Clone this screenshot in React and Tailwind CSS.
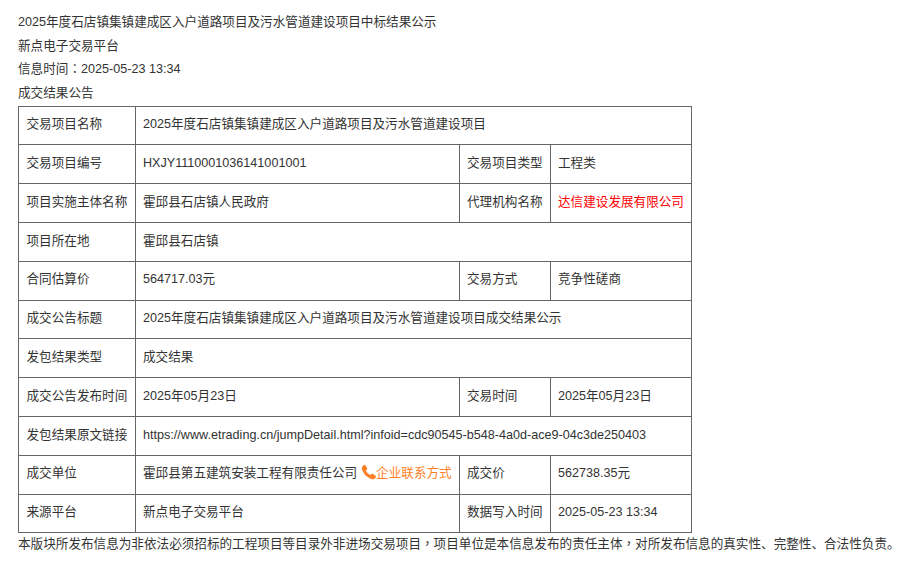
import React from 'react';

const label = 'border border-[#666] px-[7.5px] pb-[1px] font-normal text-left whitespace-nowrap';
const cell = 'border border-[#666] px-[7px] pb-[1px] whitespace-nowrap';
// centred full-width punctuation, as in the reference
const punct = "font-['Noto_Sans_CJK_TC'] leading-none";

function Phone() {
  return (
    <svg viewBox="0 0 16 16" className="inline-block w-[16px] h-[16px] align-[-3px] mr-[-1px]">
      <path
        d="M2.2 1.6 C3 0.8 4.2 0.9 4.8 1.8 L6 3.8 C6.4 4.5 6.3 5.3 5.7 5.8 L5 6.4 C5.6 8.2 7.5 10.3 9.4 11 L10.1 10.3 C10.7 9.7 11.5 9.7 12.2 10.1 L14.2 11.4 C15.1 12 15.2 13.2 14.4 14 L13.6 14.8 C12.8 15.5 11.4 15.5 10 15 C5.6 13.4 2.4 9.8 1 5.6 C0.6 4.4 0.8 3 1.6 2.2 Z"
        fill="#ff7f27"
      />
    </svg>
  );
}

function Row({ name, value, name2, value2 }) {
  return (
    <tr className="h-[38.8px]">
      <td className={label}>{name}</td>
      {name2 ? (
        <>
          <td className={cell}>{value}</td>
          <td className={cell}>{name2}</td>
          <td className={cell}>{value2}</td>
        </>
      ) : (
        <td className={cell} colSpan={3}>{value}</td>
      )}
    </tr>
  );
}

export default function App() {
  return (
    <div className="bg-white w-[921px] h-[564px] overflow-hidden px-[18px] pt-[11.4px] text-[12.6px] leading-[23.4px] text-[#333] font-['Liberation_Sans','Noto_Sans_CJK_SC',sans-serif]">
      <p>2025年度石店镇集镇建成区入户道路项目及污水管道建设项目中标结果公示</p>
      <p>新点电子交易平台</p>
      <p>信息时间<span className={punct}>：</span>2025-05-23 13:34</p>
      <p className="mb-[0.6px]">成交结果公告</p>
      <table className="w-[673px] table-fixed border-collapse">
        <colgroup>
          <col className="w-[117px]" />
          <col className="w-[324px]" />
          <col className="w-[91px]" />
          <col className="w-[141px]" />
        </colgroup>
        <tbody>
          <Row name="交易项目名称" value="2025年度石店镇集镇建成区入户道路项目及污水管道建设项目" />
          <Row name="交易项目编号" value="HXJY1110001036141001001" name2="交易项目类型" value2="工程类" />
          <Row
            name="项目实施主体名称"
            value="霍邱县石店镇人民政府"
            name2="代理机构名称"
            value2={<span className="text-[#f00]">达信建设发展有限公司</span>}
          />
          <Row name="项目所在地" value="霍邱县石店镇" />
          <Row name="合同估算价" value="564717.03元" name2="交易方式" value2="竞争性磋商" />
          <Row name="成交公告标题" value="2025年度石店镇集镇建成区入户道路项目及污水管道建设项目成交结果公示" />
          <Row name="发包结果类型" value="成交结果" />
          <Row name="成交公告发布时间" value="2025年05月23日" name2="交易时间" value2="2025年05月23日" />
          <Row name="发包结果原文链接" value="https://www.etrading.cn/jumpDetail.html?infoid=cdc90545-b548-4a0d-ace9-04c3de250403" />
          <Row
            name="成交单位"
            value={
              <>
                霍邱县第五建筑安装工程有限责任公司
                <span className="text-[#ff7f27] ml-[4px]">
                  <Phone />
                  企业联系方式
                </span>
              </>
            }
            name2="成交价"
            value2="562738.35元"
          />
          <Row name="来源平台" value="新点电子交易平台" name2="数据写入时间" value2="2025-05-23 13:34" />
        </tbody>
      </table>
      <p className="whitespace-nowrap">
        本版块所发布信息为非依法必须招标的工程项目等目录外非进场交易项目<span className={punct}>，</span>项目单位是本信息发布的责任主体<span className={punct}>，</span>对所发布信息的真实性、完整性、合法性负责。
      </p>
    </div>
  );
}
